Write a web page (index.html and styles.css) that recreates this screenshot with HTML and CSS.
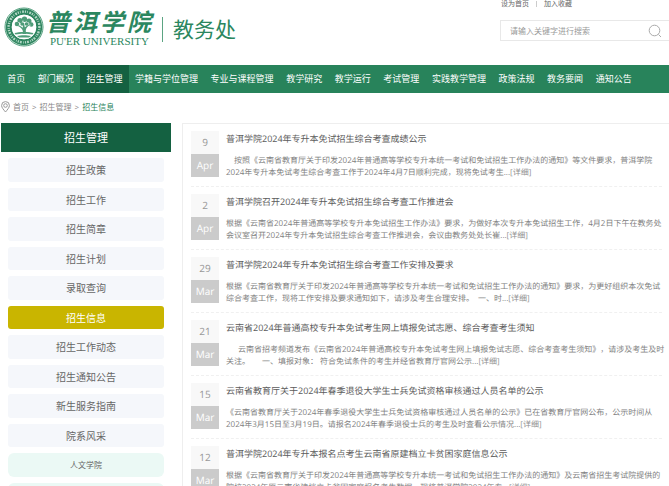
FILE: index.html
```html
<!DOCTYPE html>
<html lang="zh-CN">
<head>
<meta charset="utf-8">
<meta name="viewport" content="width=device-width, initial-scale=1">
<title>招生信息 - 普洱学院教务处</title>
<link rel="stylesheet" href="styles.css">
</head>
<body>
<header class="header">
  <a class="brand" href="#">
    <svg class="seal" viewBox="0 0 40 40" aria-hidden="true">
      <circle cx="20" cy="20" r="19" fill="none" stroke="#4b9b78" stroke-width="1"/>
      <circle cx="20" cy="20" r="15.2" fill="none" stroke="#2f8660" stroke-width="6"/>
      <circle cx="20" cy="20" r="15.4" fill="none" stroke="#b5d8c7" stroke-width="2.4" stroke-dasharray="1.2 1.1 .7 1.5 1.8 1"/>
      <circle cx="20" cy="20" r="12.2" fill="#fff"/>
      <g fill="#4f9d79">
        <circle cx="13" cy="17" r="2.3"/><circle cx="16" cy="13.500" r="2.600"/><circle cx="20.500" cy="12.300" r="2.700"/><circle cx="25" cy="14" r="2.500"/><circle cx="27.300" cy="17.500" r="2.200"/><circle cx="18" cy="17" r="1.700"/><circle cx="22.500" cy="17" r="1.800"/>
        <path d="M18.500 27c1-3 .5-5-4.500-8l1-.7 4 2.500-.5-5h1.500l.8 4.500 4.200-3 .8.800c-4 3-4.800 5-3.300 8.900z"/>
        <path d="M10.500 26c4-1.500 15-1.500 19 0l-1 1.500c-5-1-12-1-17 0zM13 29c4-1 10-1 14 0l-2 1.500H15z"/>
      </g>
      <g fill="#fff"><circle cx="15" cy="15.500" r=".6"/><circle cx="19" cy="14" r=".6"/><circle cx="24" cy="15.500" r=".6"/><circle cx="26" cy="18" r=".5"/></g>
    </svg>
    <span class="school">
      <span class="school-cn"><span>普</span><span>洱</span><span>学</span><span>院</span></span>
      <span class="school-en">PU'ER UNIVERSITY</span>
    </span>
    <span class="dept">教务处</span>
  </a>
  <div class="tools">
    <div class="quick"><a href="#">设为首页</a><i></i><a href="#">加入收藏</a></div>
    <form class="search">
      <input type="text" aria-label="关键字" placeholder="请输入关键字进行搜索">
      <button type="button" aria-label="搜索"><svg viewBox="0 0 14 14"><circle cx="6.500" cy="6.500" r="5.300"/><path d="M10.500 10.500l2.500 2.500"/></svg></button>
    </form>
  </div>
</header>
<nav class="nav">
  <a href="#">首页</a><a href="#">部门概况</a><a class="on" href="#">招生管理</a><a href="#">学籍与学位管理</a><a href="#">专业与课程管理</a><a href="#">教学研究</a><a href="#">教学运行</a><a href="#">考试管理</a><a href="#">实践教学管理</a><a href="#">政策法规</a><a href="#">教务要闻</a><a href="#">通知公告</a>
</nav>
<div class="crumbs">
  <svg viewBox="0 0 9 12" aria-hidden="true"><path d="M4.500 11C2.500 8.500.6 6.600.6 4.500a3.900 3.900 0 0 1 7.800 0C8.400 6.600 6.500 8.500 4.500 11z"/><circle cx="4.500" cy="4.500" r="1.800"/></svg>
  <a href="#">首页</a><span class="sep">&gt;</span><a href="#">招生管理</a><span class="sep">&gt;</span><a class="here" href="#">招生信息</a>
</div>
<main class="main">
  <aside class="side">
    <h2>招生管理</h2>
    <ul>
      <li><a href="#">招生政策</a></li>
      <li><a href="#">招生工作</a></li>
      <li><a href="#">招生简章</a></li>
      <li><a href="#">招生计划</a></li>
      <li><a href="#">录取查询</a></li>
      <li><a class="on" href="#">招生信息</a></li>
      <li><a href="#">招生工作动态</a></li>
      <li><a href="#">招生通知公告</a></li>
      <li><a href="#">新生服务指南</a></li>
      <li><a href="#">院系风采</a></li>
      <li><a class="sub" href="#">人文学院</a></li>
      <li><a class="sub" href="#"></a></li>
    </ul>
  </aside>
  <section class="news">
    <article>
      <time><b>9</b><span>Apr</span></time>
      <div class="text"><h3><a href="#">普洱学院2024年专升本免试招生综合考查成绩公示</a></h3>
      <p>&emsp;按照《云南省教育厅关于印发2024年普通高等学校专升本统一考试和免试招生工作办法的通知》等文件要求，普洱学院<br>2024年专升本免试考生综合考查工作于2024年4月7日顺利完成，现将免试考生...<a href="#">[详细]</a></p></div>
    </article>
    <article>
      <time><b>2</b><span>Apr</span></time>
      <div class="text"><h3><a href="#">普洱学院召开2024年专升本免试招生综合考查工作推进会</a></h3>
      <p>根据《云南省2024年普通高等学校专升本免试招生工作办法》要求，为做好本次专升本免试招生工作，4月2日下午在教务处<br>会议室召开2024年专升本免试招生综合考查工作推进会，会议由教务处处长崔...<a href="#">[详细]</a></p></div>
    </article>
    <article>
      <time><b>29</b><span>Mar</span></time>
      <div class="text"><h3><a href="#">普洱学院2024年专升本免试招生综合考查工作安排及要求</a></h3>
      <p>根据《云南省教育厅关于印发2024年普通高等学校专升本统一考试和免试招生工作办法的通知》要求，为更好组织本次免试<br>综合考查工作，现将工作安排及要求通知如下，请涉及考生合理安排。&ensp;一、时...<a href="#">[详细]</a></p></div>
    </article>
    <article>
      <time><b>21</b><span>Mar</span></time>
      <div class="text"><h3><a href="#">云南省2024年普通高校专升本免试考生网上填报免试志愿、综合考查考生须知</a></h3>
      <p>&emsp;&ensp;云南省招考频道发布《云南省2024年普通高校专升本免试考生网上填报免试志愿、综合考查考生须知》，请涉及考生及时<br>关注。&emsp;&ensp;一、填报对象： 符合免试条件的考生并经省教育厅官网公示...<a href="#">[详细]</a></p></div>
    </article>
    <article>
      <time><b>15</b><span>Mar</span></time>
      <div class="text"><h3><a href="#">云南省教育厅关于2024年春季退役大学生士兵免试资格审核通过人员名单的公示</a></h3>
      <p>《云南省教育厅关于2024年春季退役大学生士兵免试资格审核通过人员名单的公示》已在省教育厅官网公布，公示时间从<br>2024年3月15日至3月19日。请报名2024年春季退役士兵的考生及时查看公示情况...<a href="#">[详细]</a></p></div>
    </article>
    <article>
      <time><b>12</b><span>Mar</span></time>
      <div class="text"><h3><a href="#">普洱学院2024年专升本报名点考生云南省原建档立卡贫困家庭信息公示</a></h3>
      <p>根据《云南省教育厅关于印发2024年普通高等学校专升本统一考试和免试招生工作办法的通知》及云南省招生考试院提供的<br>院校2024年原云南省建档立卡贫困家庭报名考生数据，现将普洱学院2024年专...<a href="#">[详细]</a></p></div>
    </article>
  </section>
</main>
</body>
</html>
```

FILE: styles.css
```css
* { box-sizing: border-box; }
body {
  margin: 0;
  height: 100vh;
  overflow: hidden;
  background: #fff;
  color: #777;
  font: 8px/12px "Open Sans", "Noto Sans CJK SC", sans-serif;
  text-spacing-trim: space-all;
}
a { color: inherit; text-decoration: none; }
h2, h3, p, ul { margin: 0; padding: 0; font-weight: normal; }
ul { list-style: none; }

.header { display: flex; justify-content: space-between; height: 65px; }
.brand { display: flex; align-items: flex-start; padding: 7px 0 0 4px; color: #2b8760; }
.seal { width: 40px; height: 40px; }
.school { display: flex; flex-direction: column; padding: 2px 0 0 2px; }
.school-cn { display: flex; gap: 3px; font-size: 24px; line-height: 26px; font-weight: 700; font-style: italic; }
.school-en { padding-left: 4px; font: 11px/12px "Liberation Serif", serif; }
.dept { margin: 10px 0 0 11px; padding-left: 10px; border-left: 1px solid #5ba482; font-size: 21px; line-height: 25px; }

.tools { width: 169px; }
.quick { display: flex; align-items: center; gap: 7px; height: 7px; padding-left: 1px; font-size: 7px; line-height: 7px; color: #666; }
.quick i { width: 1px; height: 6px; background: #ccc; }
.search { display: flex; align-items: center; height: 21px; margin-top: 13px; border: 1px solid #e8e8e8; border-right: 0; }
.search input { flex: 1; min-width: 0; padding: 0 0 0 9px; border: 0; outline: 0; background: none; color: #666; font: inherit; }
.search input::placeholder { color: #999; opacity: 1; }
.search button { display: flex; margin: 0; padding: 0 7px 0 0; border: 0; background: none; }
.search svg { width: 14px; height: 14px; fill: none; stroke: #aaa; stroke-width: 1; }

.nav { display: flex; height: 28px; padding: 0 31px 0 1px; background: #28835b; color: #fff; font-size: 9px; line-height: 28px; }
.nav a { flex: 1 0 auto; padding: 0 6px; text-align: center; white-space: nowrap; }
.nav .on { background: #146141; }

.crumbs { display: flex; align-items: center; height: 28px; padding-left: 1px; color: #888; }
.crumbs svg { width: 9px; height: 12px; margin-right: 3px; fill: none; stroke: #999; stroke-width: 1; }
.crumbs .sep { padding: 0 3px; }
.crumbs .here { color: #28835b; }

.main { display: flex; align-items: flex-start; gap: 11px; margin: 2px 0 0 1px; }
.side { flex: 0 0 170px; text-align: center; }
.side h2 { background: #146141; color: #fff; font-size: 11px; line-height: 29px; }
.side ul { display: flex; flex-direction: column; gap: 6px; padding: 6px 7px; }
.side li a { display: block; height: 24px; border-radius: 3px; background: #f5f7fb; color: #666; font-size: 10px; line-height: 24px; }
.side li:nth-child(even) a { height: 23px; }
.side li .on { background: #c9b500; color: #fff; }
.side li .sub { border-radius: 6px; background: #ebf9f5; font-size: 8px; }

.news { flex: 1; min-width: 0; padding: 0 7px 0 8px; border: 1px solid #eee; border-width: 1px 0 0 1px; text-rendering: geometricPrecision; }
.news article { display: flex; gap: 7px; padding: 7px 0; border-bottom: 1px dashed #f0f0f0; }
.news time { display: flex; flex-direction: column; width: 28px; height: 46px; flex: none; text-align: center; line-height: 23px; font-size: 10px; }
.news b { height: 23px; background: #f8f8f8; color: #999; font-weight: normal; }
.news time span { height: 23px; background: #cbcbcb; color: #fff; }
.news .text { flex: 1; min-width: 0; }
.news h3 { margin-bottom: 8px; color: #5c5c5c; font-size: 9px; line-height: 16px; }
.news p { color: #808080; white-space: nowrap; }
.news p a { color: #909090; }
```
